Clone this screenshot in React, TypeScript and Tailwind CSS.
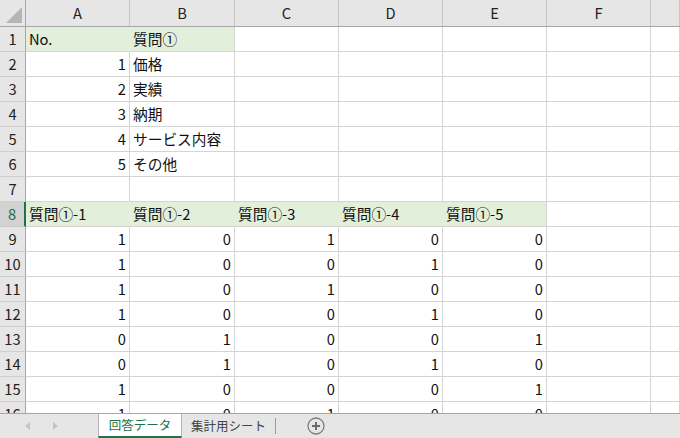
import React from "react";

const COLS = ["A", "B", "C", "D", "E", "F", ""];
const COL_W = [
  "w-[104px]",
  "w-[105px]",
  "w-[104px]",
  "w-[104px]",
  "w-[104px]",
  "w-[104px]",
  "flex-1",
];

type Cell = { v: string; right?: boolean };

const t = (v: string): Cell => ({ v });
const n = (v: number): Cell => ({ v: String(v), right: true });

const answers = [
  [1, 0, 1, 0, 0],
  [1, 0, 0, 1, 0],
  [1, 0, 1, 0, 0],
  [1, 0, 0, 1, 0],
  [0, 1, 0, 0, 1],
  [0, 1, 0, 1, 0],
  [1, 0, 0, 0, 1],
  [1, 0, 1, 0, 0],
];

const rows: Cell[][] = [
  [t("No."), t("質問①")],
  [n(1), t("価格")],
  [n(2), t("実績")],
  [n(3), t("納期")],
  [n(4), t("サービス内容")],
  [n(5), t("その他")],
  [],
  [1, 2, 3, 4, 5].map((i) => t(`質問①-${i}`)),
  ...answers.map((r) => r.map(n)),
];

// green fill: row 1 A-B, row 8 A-E
const filled = (r: number, c: number) =>
  (r === 0 && c <= 1) || (r === 7 && c <= 4);

export default function App() {
  return (
    <div className="flex h-[438px] w-[680px] flex-col overflow-hidden bg-white font-['Noto_Sans_CJK_JP',sans-serif] text-[14.7px] leading-none text-[#111]">
      {/* column headers */}
      <div className="flex h-[27px] shrink-0 border-b border-[#a6a6a6] bg-[#e6e6e6]">
        <div className="flex w-[26px] shrink-0 items-end justify-end border-r border-[#a6a6a6] p-[3px]">
          <svg width="16" height="16" viewBox="0 0 16 16">
            <polygon points="16,0 16,16 0,16" fill="#b5b5b5" />
          </svg>
        </div>
        {COLS.map((c, i) => (
          <div
            key={i}
            className={`${COL_W[i]} flex shrink-0 items-center justify-center border-r border-[#c6c6c6] pt-[1px] text-[#222]`}
          >
            {c}
          </div>
        ))}
      </div>

      {/* grid */}
      <div className="flex-1 overflow-hidden">
        {rows.map((row, r) => {
          const sel = r === 7;
          return (
            <div key={r} className="flex h-[25px]">
              <div
                className={
                  sel
                    ? "flex w-[26px] shrink-0 items-center justify-center border-b border-r-2 border-b-[#c6c6c6] border-r-[#217346] bg-[#d2d2d2] text-[#1e6b45]"
                    : "flex w-[26px] shrink-0 items-center justify-center border-b border-r border-b-[#cfcfcf] border-r-[#a6a6a6] bg-[#e6e6e6] text-[#222]"
                }
              >
                {r + 1}
              </div>
              {COLS.map((_, c) => {
                const cell = row[c];
                const f = filled(r, c);
                const rb = f && filled(r, c + 1) ? "border-r-[#e2efda]" : "border-r-[#d4d4d4]";
                const bb = f && filled(r + 1, c) ? "border-b-[#e2efda]" : "border-b-[#d4d4d4]";
                return (
                  <div
                    key={c}
                    className={`${COL_W[c]} flex shrink-0 items-center overflow-visible whitespace-nowrap border-b border-r px-[3px] ${rb} ${bb} ${
                      f ? "bg-[#e2efda]" : ""
                    } ${cell?.right ? "justify-end" : "justify-start"}`}
                  >
                    {cell?.v}
                  </div>
                );
              })}
            </div>
          );
        })}
      </div>

      {/* sheet tabs */}
      <div className="flex h-[25px] shrink-0 border-t border-[#a6a6a6] bg-[#e6e6e6] text-[12.5px]">
        <div className="flex w-[98px] shrink-0 items-center pl-[25px]">
          <svg width="5" height="8" viewBox="0 0 5 8">
            <polygon points="5,0 5,8 0,4" fill="#c4c4c4" />
          </svg>
          <svg width="5" height="8" viewBox="0 0 5 8" className="ml-[23px]">
            <polygon points="0,0 0,8 5,4" fill="#c4c4c4" />
          </svg>
        </div>
        <div className="flex w-[84px] shrink-0 items-center justify-center border-x border-b-2 border-x-[#b5b5b5] border-b-[#217346] bg-white pt-[1px] text-[#217346]">
          回答データ
        </div>
        <div className="flex w-[93px] shrink-0 items-center justify-center text-[#444]">
          集計用シート
        </div>
        <div className="my-[4px] w-px shrink-0 bg-[#9b9b9b]" />
        <div className="flex items-center pl-[31px]">
          <svg width="18" height="18" viewBox="0 0 18 18">
            <circle cx="9" cy="9" r="8" fill="none" stroke="#7a7a7a" strokeWidth="1.3" />
            <path d="M9 5v8M5 9h8" stroke="#6a6a6a" strokeWidth="2" />
          </svg>
        </div>
      </div>
    </div>
  );
}
